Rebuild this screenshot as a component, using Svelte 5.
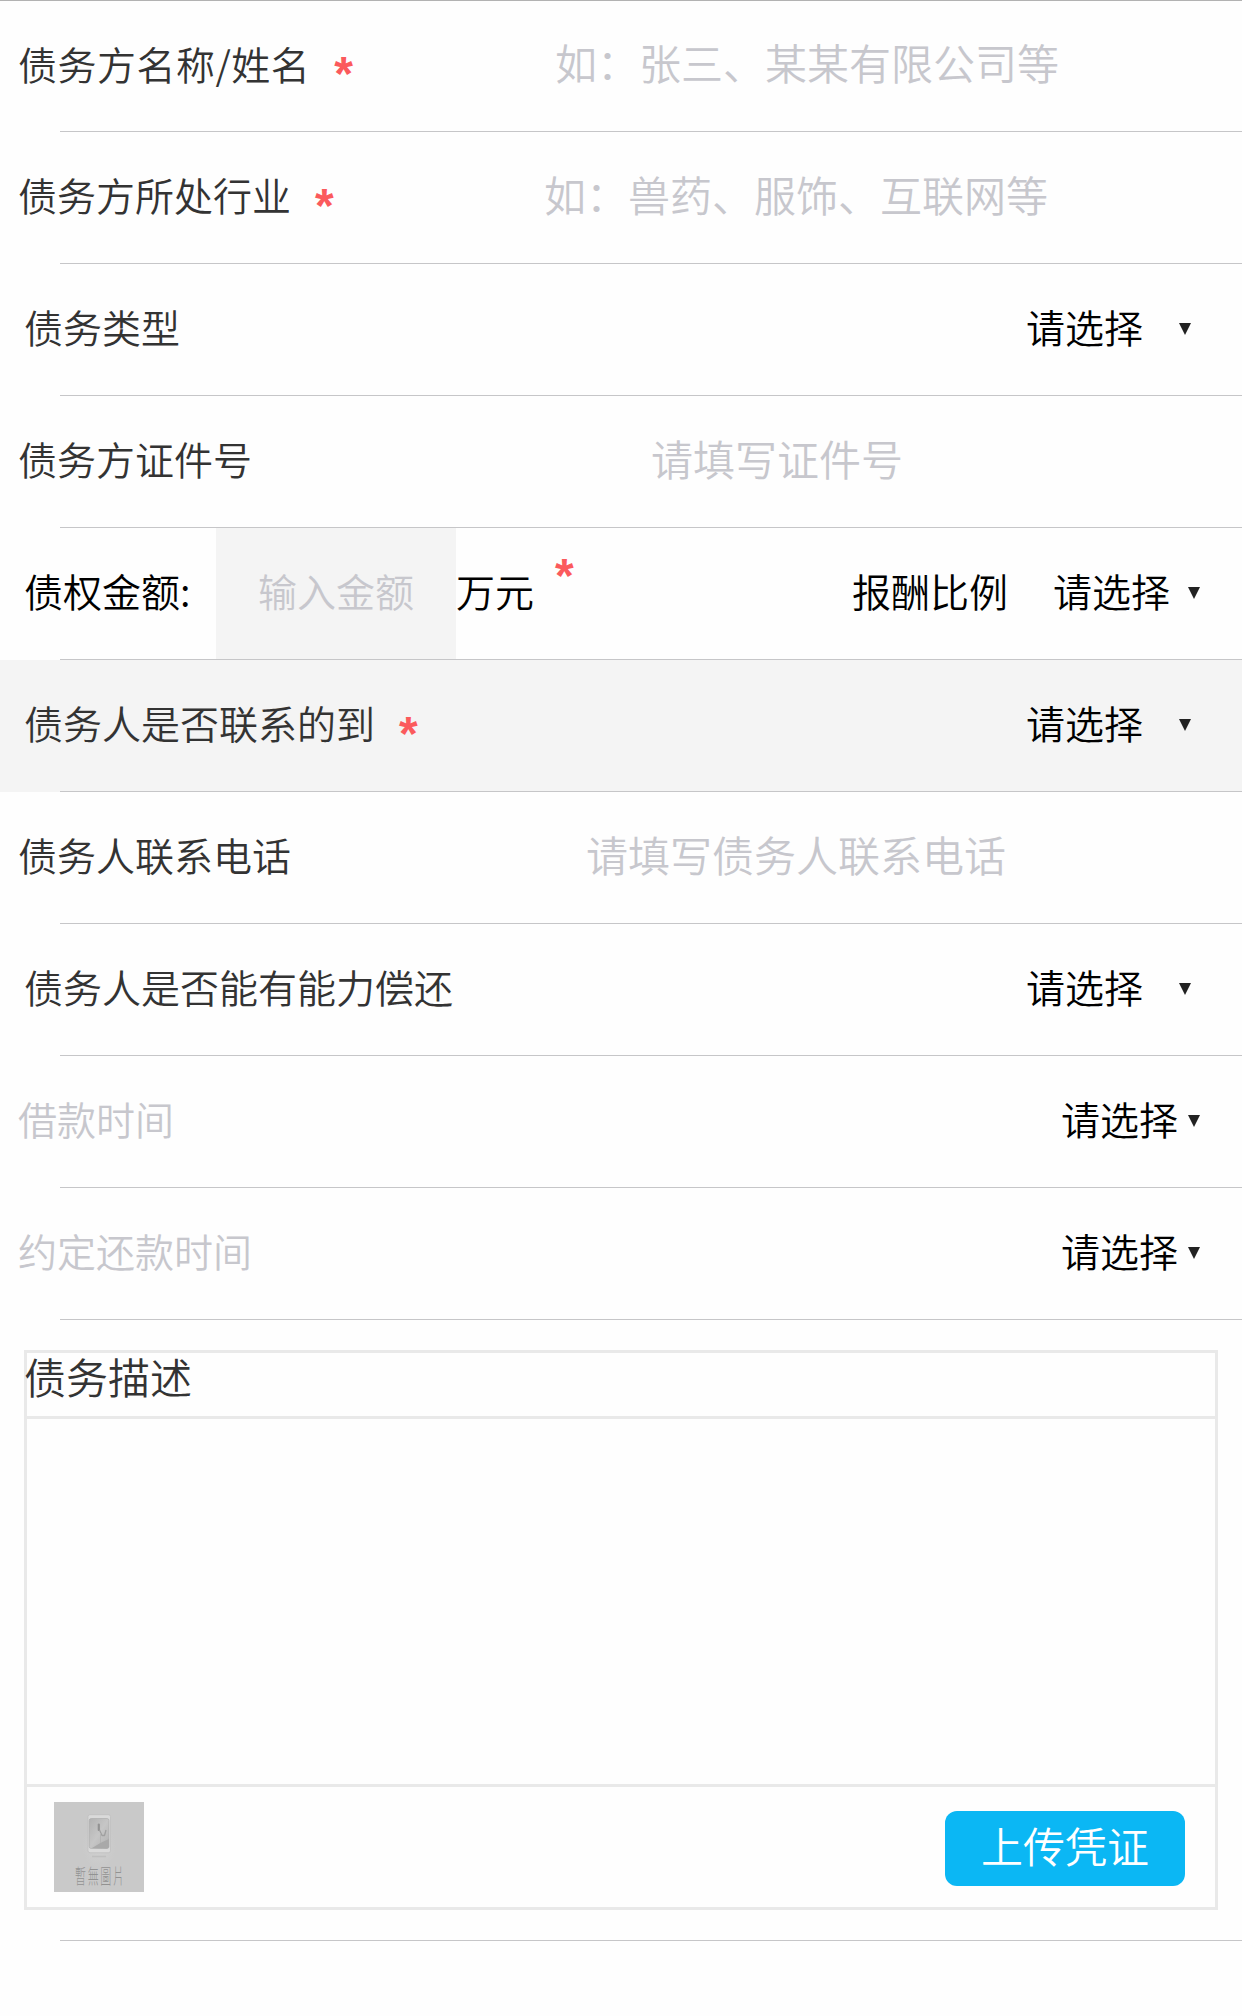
<script>
  const rows = [
    { kind: 'input', label: '债务方名称/姓名', required: true, size: 'w-name', placeholder: '如：张三、某某有限公司等' },
    { kind: 'input', label: '债务方所处行业', required: true, size: 'w-mid', placeholder: '如：兽药、服饰、互联网等' },
    { kind: 'select', label: '债务类型' },
    { kind: 'input', label: '债务方证件号', size: 'w-id', placeholder: '请填写证件号' },
    { kind: 'amount' },
    { kind: 'select', label: '债务人是否联系的到', required: true, active: true },
    { kind: 'input', label: '债务人联系电话', size: 'w-mid', placeholder: '请填写债务人联系电话' },
    { kind: 'select', label: '债务人是否能有能力偿还' },
    { kind: 'date', label: '借款时间' },
    { kind: 'date', label: '约定还款时间' }
  ];
</script>

{#snippet star()}
  <span class="star">*</span>
{/snippet}

{#snippet arrow()}
  <svg class="arrow" viewBox="0 0 12 12"><path d="M0 0H12L6 12Z" fill="#222" /></svg>
{/snippet}

<main class="form">
  {#each rows as row}
    <section class="item" class:active={row.active}>
      <div class="row {row.kind}">
        {#if row.kind === 'input'}
          <div class="label {row.size}">{row.label}{#if row.required}{@render star()}{/if}</div>
          <div class="field">{row.placeholder}</div>
        {:else if row.kind === 'amount'}
          <div class="amount-label">债权金额:</div>
          <div class="amount-field">输入金额</div>
          <div class="unit">万元</div>
          {@render star()}
          <div class="ratio">报酬比例</div>
          <div class="choice">请选择</div>
          {@render arrow()}
        {:else}
          <div class="label">{row.label}{#if row.required}{@render star()}{/if}</div>
          <div class="choice">请选择</div>
          {@render arrow()}
        {/if}
      </div>
      <div class="rule"></div>
    </section>
  {/each}

  <section class="desc">
    <div class="desc-title">债务描述</div>
    <div class="desc-body"></div>
    <div class="desc-foot">
      <svg class="thumb" viewBox="0 0 90 90">
        <defs>
          <linearGradient id="screen" x1="0" y1="0" x2="1" y2="1">
            <stop offset="0" stop-color="#b2b2b2" />
            <stop offset="0.5" stop-color="#c6c6c6" />
            <stop offset="1" stop-color="#b0b0b0" />
          </linearGradient>
          <radialGradient id="glow">
            <stop offset="0" stop-color="#d0d0d0" />
            <stop offset="1" stop-color="#c9c9c9" />
          </radialGradient>
        </defs>
        <rect width="90" height="90" fill="#c9c9c9" />
        <ellipse cx="45" cy="44" rx="17" ry="22" fill="url(#glow)" />
        <rect x="34" y="12.7" width="22.5" height="38" rx="2" fill="#dadada" stroke="#bdbdbd" stroke-width="0.7" />
        <rect x="35.2" y="16.5" width="19.8" height="30" rx="2" fill="url(#screen)" stroke="#aaa" stroke-width="0.6" />
        <path d="M38 46Q45 41 55 37V45L53 46.5Z" fill="#a9a9a9" />
        <path d="M44.8 22.5V28" stroke="#929292" stroke-width="2.2" stroke-linecap="round" />
        <path d="M45.5 28L48 33.5H50.5L52 28" fill="none" stroke="#a0a0a0" stroke-width="1.3" stroke-linejoin="round" />
        <path d="M46.5 31V41" stroke="#b4b4b4" />
        <path d="M38 54.5H52" stroke="#bfbfbf" stroke-width="1.5" />
        <text class="thumb-text" transform="translate(21 82.2) scale(0.55 1)">暫無圖片</text>
      </svg>
      <button class="upload">上传凭证</button>
    </div>
  </section>
  <div class="rule"></div>
</main>

<style>
  :global(body) {
    margin: 0;
    background: #fefefe;
  }
  .form {
    box-sizing: border-box;
    width: 1242px;
    height: 2016px;
    overflow: hidden;
    border-top: 1px solid #b2b2b2;
    font-family: 'Noto Sans CJK SC', sans-serif;
    font-weight: 350;
    font-size: 39px;
    line-height: 58px;
    color: #333;
    white-space: nowrap;
  }
  .row {
    display: flex;
    align-items: center;
    box-sizing: border-box;
    height: 131px;
    padding-bottom: 7px;
  }
  .item:first-child .row {
    height: 130px;
  }
  .rule {
    height: 1px;
    margin-left: 60px;
    background: #c6c6c8;
  }
  .active {
    background: #f4f4f4;
  }
  .label {
    display: flex;
    align-items: center;
  }
  .input,
  .date {
    padding-left: 18px;
  }
  .select {
    padding-left: 24px;
  }
  .w-name {
    width: 354px;
    letter-spacing: 0.5px;
  }
  .w-mid { width: 332px; }
  .w-id { width: 294px; }
  .field {
    flex: 1;
    padding-bottom: 1px;
    text-align: center;
    font-size: 42px;
    color: #c7c7cd;
  }
  .star {
    height: 24px;
    margin: 0 0 1px 24px;
    font: bold 48px/48px 'Liberation Sans', sans-serif;
    color: #fb5a5c;
  }
  .choice {
    margin-left: auto;
    color: #000;
  }
  .arrow {
    width: 12px;
    height: 12px;
    margin: 5px 51px 0 36px;
  }
  .date .label {
    color: #c7c7cd;
  }
  .date .arrow {
    margin: 5px 42px 0 10px;
  }
  .amount {
    padding-left: 24px;
    color: #000;
  }
  .amount-label {
    width: 192px;
  }
  .amount-field {
    box-sizing: border-box;
    align-self: flex-start;
    width: 240px;
    height: 131px;
    padding-bottom: 6px;
    background: #f4f4f4;
    line-height: 125px;
    text-align: center;
    color: #c7c7cd;
  }
  .amount .star {
    margin: 0 0 53px 21px;
  }
  .ratio {
    margin-left: auto;
  }
  .amount .choice {
    margin-left: 45px;
  }
  .amount .arrow {
    margin: 5px 42px 0 18px;
  }
  .desc {
    display: grid;
    grid-template-rows: 63px 365px 120px;
    row-gap: 3px;
    margin: 30px 24px;
    border: 3px solid #e9e9e9;
    background: #e9e9e9;
  }
  .desc > div {
    background: #fefefe;
  }
  .desc-title {
    font-size: 42px;
    line-height: 46px;
    text-indent: -3px;
  }
  .desc-foot {
    display: flex;
    align-items: center;
    justify-content: space-between;
    padding: 0 30px 0 27px;
  }
  .thumb {
    width: 90px;
    height: 90px;
  }
  .thumb-text {
    font: 300 20px 'Noto Sans CJK TC', sans-serif;
    letter-spacing: 3px;
    fill: #929292;
  }
  .upload {
    width: 240px;
    height: 75px;
    margin: 3px 0 0;
    padding: 0 0 7px;
    border: 0;
    border-radius: 12px;
    background: #0bb7f4;
    color: #fff;
    font: inherit;
    font-size: 42px;
    line-height: 68px;
  }
</style>
